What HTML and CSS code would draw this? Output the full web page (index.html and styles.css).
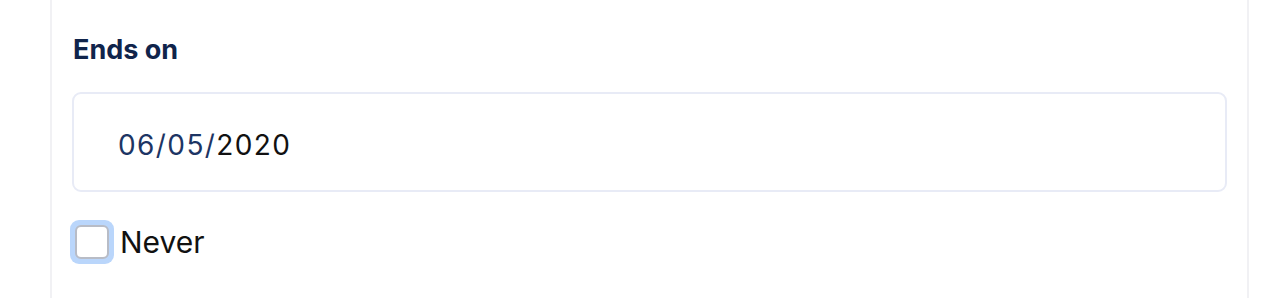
FILE: index.html
```html
<!DOCTYPE html>
<html>
<head>
<meta charset="utf-8">
<link rel="stylesheet" href="styles.css">
</head>
<body>
<div class="card">
  <div class="label">Ends on</div>
  <div class="input">
    <span class="seg">06</span><span class="seg">/</span><span class="seg">05</span><span class="seg">/</span><span class="year">2020</span>
  </div>
  <label class="check-row">
    <span class="ring"><span class="box"></span></span>
    <span class="check-text">Never</span>
  </label>
</div>
</body>
</html>
```
FILE: styles.css
```css
html, body {
  margin: 0;
  padding: 0;
  background: #ffffff;
  height: 298px;
  overflow: hidden;
}
.card {
  margin-left: 50px;
  width: 1155px;
  height: 265px;
  border-left: 2px solid #f1f1f4;
  border-right: 2px solid #f1f1f4;
  padding: 33px 20px 0 20px;
  box-sizing: content-box;
  font-family: Inter, "Noto Sans", sans-serif;
}
.label {
  font-size: 27px;
  font-weight: 700;
  color: #10244b;
  line-height: 34px;
  padding-left: 1px;
}
.input {
  margin-top: 25px;
  height: 96px;
  box-sizing: content-box;
  border: 2px solid #e8ebf6;
  border-radius: 9px;
  display: flex;
  align-items: center;
  padding-left: 44px;
  font-size: 28px;
  letter-spacing: 1.4px;
  line-height: 34px;
}
.input span {
  position: relative;
  top: 3px;
}
.seg {
  color: #1d3564;
}
.year {
  color: #111111;
}
.check-row {
  margin-top: 28px;
  display: flex;
  align-items: center;
  margin-left: -2px;
}
.ring {
  width: 44px;
  height: 44px;
  box-sizing: border-box;
  border-radius: 9px;
  background: #bad6fb;
  display: flex;
  align-items: center;
  justify-content: center;
}
.box {
  width: 34px;
  height: 34px;
  box-sizing: border-box;
  border: 2px solid #b8bcc6;
  border-radius: 6px;
  background: #ffffff;
}
.check-text {
  margin-left: 6px;
  font-size: 30px;
  color: #111111;
  line-height: 36px;
}
```
